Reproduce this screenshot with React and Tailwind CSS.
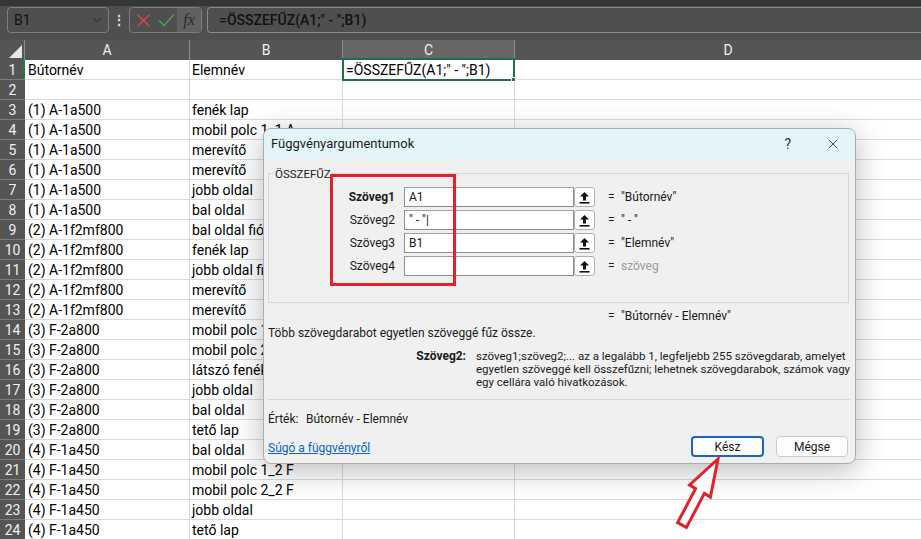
import React from 'react';
import { X, ChevronDown } from 'lucide-react';

const data = [
  ['Bútornév', 'Elemnév'],
  ['', ''],
  ['(1) A-1a500', 'fenék lap'],
  ['(1) A-1a500', 'mobil polc 1_1 A'],
  ['(1) A-1a500', 'merevítő'],
  ['(1) A-1a500', 'merevítő'],
  ['(1) A-1a500', 'jobb oldal'],
  ['(1) A-1a500', 'bal oldal'],
  ['(2) A-1f2mf800', 'bal oldal fiók'],
  ['(2) A-1f2mf800', 'fenék lap'],
  ['(2) A-1f2mf800', 'jobb oldal fiók'],
  ['(2) A-1f2mf800', 'merevítő'],
  ['(2) A-1f2mf800', 'merevítő'],
  ['(3) F-2a800', 'mobil polc 1_1 F'],
  ['(3) F-2a800', 'mobil polc 2_1 F'],
  ['(3) F-2a800', 'látszó fenék'],
  ['(3) F-2a800', 'jobb oldal'],
  ['(3) F-2a800', 'bal oldal'],
  ['(3) F-2a800', 'tető lap'],
  ['(4) F-1a450', 'bal oldal'],
  ['(4) F-1a450', 'mobil polc 1_2 F'],
  ['(4) F-1a450', 'mobil polc 2_2 F'],
  ['(4) F-1a450', 'jobb oldal'],
  ['(4) F-1a450', 'tető lap'],
];

function UpIcon() {
  return (
    <svg width="11" height="13" viewBox="0 0 11 13">
      <path d="M5.5 1 L10 5.5 H7 V9.5 H4 V5.5 H1 Z" fill="#111" />
      <rect x="0.5" y="11" width="10" height="1.6" fill="#111" />
    </svg>
  );
}

function ArgRow({ label, bold, value, result, gray }) {
  return (
    <div className="flex items-center h-[20px]">
      <div className={`w-[126px] text-right text-[12px] ${bold ? 'font-bold' : ''}`}>{label}</div>
      <div className="ml-[9px] w-[170px] h-[20px] bg-white border border-[#8c8c8c] border-t-[#a0a0a0] flex items-center pl-[4px] text-[12px] whitespace-pre">
        {value}
      </div>
      <div className="w-[21px] h-[20px] rounded-[3px] border border-[#b0b0b0] bg-white flex items-center justify-center">
        <UpIcon />
      </div>
      <div className="ml-[13px] w-[8px] text-[12px]">=</div>
      <div className={`ml-[5px] text-[12px] whitespace-pre ${gray ? 'text-[#9a9a9a]' : ''}`}>{result}</div>
    </div>
  );
}

export default function App() {
  return (
    <div className="relative w-[921px] h-[539px] overflow-hidden bg-white font-['Roboto',sans-serif]">
      {/* top strip */}
      <div className="h-[6px] bg-[#363636]" />
      {/* formula bar */}
      <div className="h-[34px] bg-[#4f4f4f] flex items-start pt-[1px]">
        <div className="ml-[7px] w-[102px] h-[26px] rounded-[4px] border border-[#7e7e7e] flex items-center pl-[6px] pr-[4px]">
          <span className="flex-1 text-[14px] text-[#111]">B1</span>
          <ChevronDown size={14} strokeWidth={1.5} className="text-[#1a1a1a]" />
        </div>
        <div className="w-[20px] h-[26px] flex items-center justify-center text-[#d8d8d8] text-[14px] font-bold">⋮</div>
        <div className="w-[73px] h-[26px] rounded-[4px] border border-[#7e7e7e] flex items-center overflow-hidden">
          <div className="w-[26px] h-full flex items-center justify-center">
            <svg width="15" height="15" viewBox="0 0 15 15">
              <path d="M1.5 1.5 L13.5 13.5 M13.5 1.5 L1.5 13.5" stroke="#e0474c" strokeWidth="1.4" fill="none" />
            </svg>
          </div>
          <div className="w-[21px] h-full flex items-center justify-center">
            <svg width="17" height="14" viewBox="0 0 17 14">
              <path d="M1 7.5 L6 12.5 L16 1.5" stroke="#42a860" strokeWidth="1.4" fill="none" />
            </svg>
          </div>
          <div className="flex-1 h-full bg-[#616161] flex items-center justify-center text-[#2a2a2a] text-[16px] italic font-['Liberation_Serif',serif]">
            fx
          </div>
        </div>
        <div className="ml-[5px] flex-1 h-[26px] rounded-l-[4px] border-y border-l border-[#8a8a8a] flex items-center pl-[11px] text-[14px] font-medium text-[#111] whitespace-pre">
          =ÖSSZEFŰZ(A1;" - ";B1)
        </div>
      </div>
      {/* column header */}
      <div className="flex h-[20px] bg-[#555555] text-[#f0f0f0] text-[14px] leading-[21px]">
        <div className="w-[25px] shrink-0 relative border-r border-[#8a8a8a]">
          <svg className="absolute left-[9px] top-[5px]" width="13" height="13" viewBox="0 0 13 13">
            <path d="M13 0 L13 13 L0 13 Z" fill="#e6e6e6" />
          </svg>
        </div>
        <div className="w-[165px] shrink-0 border-r border-[#8a8a8a] text-center">A</div>
        <div className="w-[153px] shrink-0 border-r border-[#8a8a8a] text-center">B</div>
        <div className="w-[172px] shrink-0 border-r border-[#8a8a8a] bg-[#676767] text-center">C</div>
        <div className="w-[426px] shrink-0 text-center">D</div>
      </div>
      {/* rows */}
      {data.map((r, i) => (
        <div key={i} className="flex h-[20px] text-[14px] text-black">
          <div className="w-[25px] shrink-0 bg-[#555555] text-[#f0f0f0] border-b border-[#7c7c7c] text-center leading-[21px] relative">
            {i + 1}
            {i === 0 && <div className="absolute right-0 top-0 bottom-0 w-[2px] bg-[#1f7a45]" />}
          </div>
          <div className="w-[165px] shrink-0 border-b border-r border-[#dadada] pl-[3px] leading-[21px] whitespace-nowrap">{r[0]}</div>
          <div className="w-[153px] shrink-0 border-b border-r border-[#dadada] pl-[2px] leading-[21px] whitespace-nowrap">{r[1]}</div>
          <div className="w-[172px] shrink-0 border-b border-r border-[#dadada] pl-[3px] leading-[21px] whitespace-pre">
            {i === 0 ? '=ÖSSZEFŰZ(A1;" - ";B1)' : ''}
          </div>
          <div className="flex-1 border-b border-[#dadada]" />
        </div>
      ))}
      {/* selection C1 */}
      <div className="absolute left-[342px] top-[58px] w-[173px] h-[23px] border-2 border-[#1f7246]" />
      <div className="absolute left-[511px] top-[77px] w-[5px] h-[5px] bg-[#1f7246] border border-white" />

      {/* dialog */}
      <div className="absolute left-[263px] top-[128px] w-[593px] h-[336px] rounded-[8px] bg-[#f0f0f0] border border-[#acacac] shadow-[0_6px_30px_rgba(0,0,0,0.28)] overflow-hidden text-[12px] text-[#1a1a1a]">
        <div className="h-[30px] bg-[#e4f5fa] flex items-center pl-[7px]">
          <span className="flex-1 text-[13px] text-[#1a1a1a]">Függvényargumentumok</span>
          <span className="text-[14px] text-[#333] mr-[34px]">?</span>
          <X size={16} strokeWidth={1.2} className="text-[#222] mr-[14px]" />
        </div>
        <div className="pl-[4px]">
          <div className="mt-[14px] relative w-[581px] h-[130px] border border-[#d7d7d7]">
            <div className="absolute -top-[8px] left-[5px] px-[1px] bg-[#f0f0f0] text-[11.5px] text-[#222]">ÖSSZEFŰZ</div>
            <div className="pt-[13px] flex flex-col gap-[3px]">
              <ArgRow label="Szöveg1" bold value="A1" result={'"Bútornév"'} />
              <ArgRow label="Szöveg2" value={'" - "|'} result={'" - "'} />
              <ArgRow label="Szöveg3" value="B1" result={'"Elemnév"'} />
              <ArgRow label="Szöveg4" value="" result="szöveg" gray />
            </div>
          </div>
          <div className="mt-[5px] h-[16px] flex items-center pl-[340px]">
            <span className="w-[8px]">=</span>
            <span className="ml-[5px] whitespace-pre">"Bútornév - Elemnév"</span>
          </div>
          <div className="mt-[1px] h-[16px] leading-[16px]">Több szövegdarabot egyetlen szöveggé fűz össze.</div>
          <div className="mt-[9px] flex">
            <div className="w-[198px] text-right font-bold leading-[13px]">Szöveg2:</div>
            <div className="ml-[10px] w-[378px] leading-[13px] text-[11.5px]">
              szöveg1;szöveg2;... az a legalább 1, legfeljebb 255 szövegdarab, amelyet egyetlen szöveggé kell összefűzni; lehetnek szövegdarabok, számok vagy egy cellára való hivatkozások.
            </div>
          </div>
          <div className="mt-[10px] w-[582px] h-px bg-[#d6d6d6]" />
          <div className="mt-[11px] h-[16px] flex items-center">
            <span className="w-[38px]">Érték:</span>
            <span>Bútornév - Elemnév</span>
          </div>
          <div className="mt-[9px] w-[582px] h-[21px] flex items-center">
            <span className="flex-1 pt-[2px] text-[#0a62c9] underline">Súgó a függvényről</span>
            <div className="w-[73px] h-[21px] rounded-[4px] border-2 border-[#1866c0] bg-[#fdfdfd] flex items-center justify-center">Kész</div>
            <div className="ml-[12px] mr-[2px] w-[72px] h-[21px] rounded-[4px] border border-[#cccccc] bg-[#fdfdfd] flex items-center justify-center">Mégse</div>
          </div>
        </div>
      </div>

      {/* red highlight box */}
      <div className="absolute left-[330px] top-[174px] w-[126px] h-[112px] border-[3px] border-[#e5202a]" />

      {/* red arrow */}
      <svg className="absolute left-[670px] top-[455px]" width="60" height="80" viewBox="0 0 60 80">
        <polygon
          points="48,4 40.4,42 34.4,38.4 16.4,72.4 7.6,67.6 25.6,33.6 19.6,30"
          fill="white"
          stroke="#e5202a"
          strokeWidth="3"
          strokeLinejoin="miter"
        />
      </svg>
    </div>
  );
}
